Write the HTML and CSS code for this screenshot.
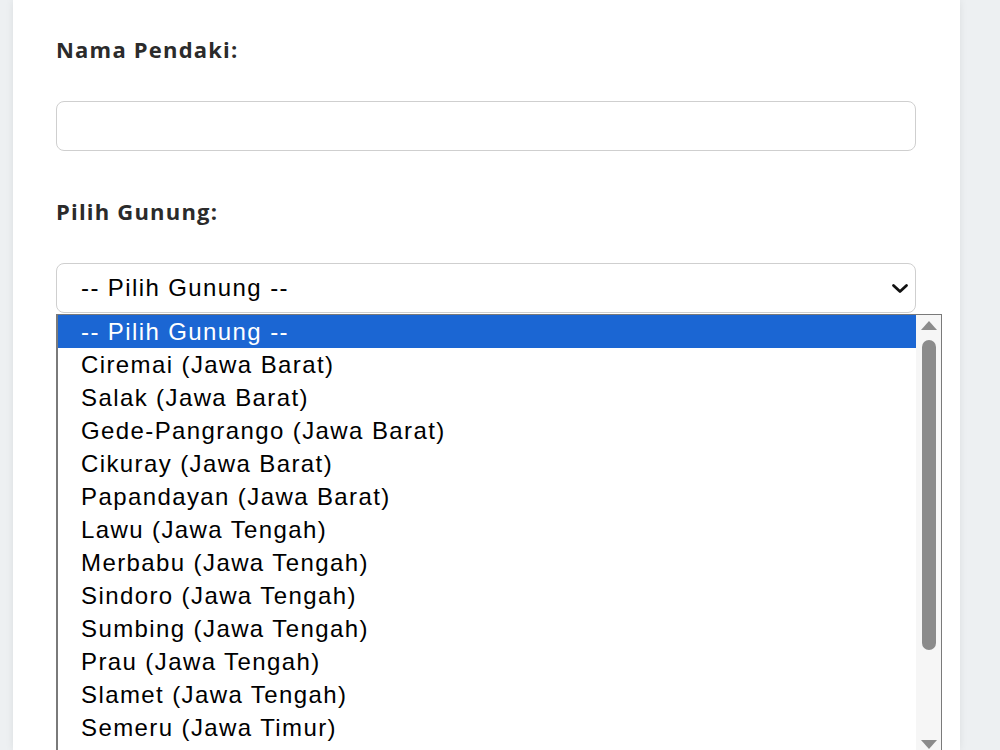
FILE: index.html
```html
<!DOCTYPE html>
<html lang="id">
<head>
    <meta charset="UTF-8">
    <meta name="viewport" content="width=device-width, initial-scale=1.0">
    <title>Pendaftaran Pendakian</title>
    <link rel="stylesheet" href="styles.css">
</head>
<body>

<div class="card">
    <form class="form">
        <div class="form-group">
            <label for="nama">Nama Pendaki:</label>
            <input type="text" id="nama" name="nama">
        </div>

        <div class="form-group">
            <label>Pilih Gunung:</label>
            <div class="select-wrap">
                <div class="select-box">
                    <span>-- Pilih Gunung --</span>
                    <svg class="chevron" width="18" height="11" viewBox="0 0 18 11">
                        <path d="M2.5 2.5 L9 8.5 L15.5 2.5" fill="none" stroke="#111" stroke-width="2.8" stroke-linecap="round" stroke-linejoin="round"/>
                    </svg>
                </div>

                <div class="dropdown">
                    <ul class="options">
                        <li class="selected">-- Pilih Gunung --</li>
                        <li>Ciremai (Jawa Barat)</li>
                        <li>Salak (Jawa Barat)</li>
                        <li>Gede-Pangrango (Jawa Barat)</li>
                        <li>Cikuray (Jawa Barat)</li>
                        <li>Papandayan (Jawa Barat)</li>
                        <li>Lawu (Jawa Tengah)</li>
                        <li>Merbabu (Jawa Tengah)</li>
                        <li>Sindoro (Jawa Tengah)</li>
                        <li>Sumbing (Jawa Tengah)</li>
                        <li>Prau (Jawa Tengah)</li>
                        <li>Slamet (Jawa Tengah)</li>
                        <li>Semeru (Jawa Timur)</li>
                    </ul>
                    <div class="scrollbar">
                        <span class="arrow-up"></span>
                        <span class="thumb"></span>
                        <span class="arrow-down"></span>
                    </div>
                </div>
            </div>
        </div>
    </form>
</div>

</body>
</html>
```

FILE: styles.css
```css
html, body {
    height: 100%;
}

body {
    margin: 0;
    padding: 0;
    background-color: #edf0f2;
    overflow: hidden;
}

.card {
    margin-left: 13px;
    width: 947px;
    min-height: 100%;
    box-sizing: border-box;
    padding: 34px 44px 0 43px;
    background-color: #fff;
    box-shadow: 0 0 8px rgba(0, 0, 0, 0.08);
}

.form-group {
    margin-bottom: 45px;
}

.form-group label {
    display: block;
    font-family: "Open Sans", "Noto Sans", sans-serif;
    font-weight: 700;
    font-size: 22px;
    line-height: 30px;
    letter-spacing: 1.2px;
    color: #2b2b2b;
    margin-bottom: 37px;
}

.form-group input {
    display: block;
    width: 100%;
    height: 50px;
    box-sizing: border-box;
    border: 1px solid #cfcfcf;
    border-radius: 8px;
    font-family: "Liberation Sans", Arial, sans-serif;
    font-size: 24px;
    padding: 0 24px;
    outline: none;
}

.select-wrap {
    position: relative;
}

.select-box {
    display: flex;
    align-items: center;
    justify-content: space-between;
    height: 50px;
    box-sizing: border-box;
    border: 1px solid #cfcfcf;
    border-radius: 8px;
    padding: 0 6px 0 24px;
    font-family: "Liberation Sans", Arial, sans-serif;
    font-size: 24px;
    letter-spacing: 1.4px;
    color: #000;
}

.chevron {
    display: block;
}

/* daftar pilihan yang sedang terbuka */
.dropdown {
    position: absolute;
    top: 51px;
    left: 0;
    width: 886px;
    height: 460px;
    box-sizing: border-box;
    border: 1px solid #7a7a7a;
    border-left-width: 2px;
    background-color: #fff;
    display: flex;
}

.options {
    list-style: none;
    margin: 0;
    padding: 0;
    flex: 1;
}

.options li {
    height: 33px;
    line-height: 33px;
    padding-left: 23px;
    font-family: "Liberation Sans", Arial, sans-serif;
    font-size: 24px;
    letter-spacing: 1.4px;
    color: #000;
    white-space: nowrap;
}

.options li.selected {
    background-color: #1b66d3;
    color: #fff;
}

.scrollbar {
    width: 25px;
    background-color: #f6f6f6;
    display: flex;
    flex-direction: column;
    align-items: center;
}

.arrow-up {
    margin-top: 6px;
    width: 0;
    height: 0;
    border-left: 8px solid transparent;
    border-right: 8px solid transparent;
    border-bottom: 9px solid #8b8b8b;
}

.thumb {
    margin-top: 10px;
    width: 14px;
    height: 310px;
    border-radius: 7px;
    background-color: #8b8b8b;
}

.arrow-down {
    margin-top: 90px;
    width: 0;
    height: 0;
    border-left: 8px solid transparent;
    border-right: 8px solid transparent;
    border-top: 9px solid #8b8b8b;
}
```
